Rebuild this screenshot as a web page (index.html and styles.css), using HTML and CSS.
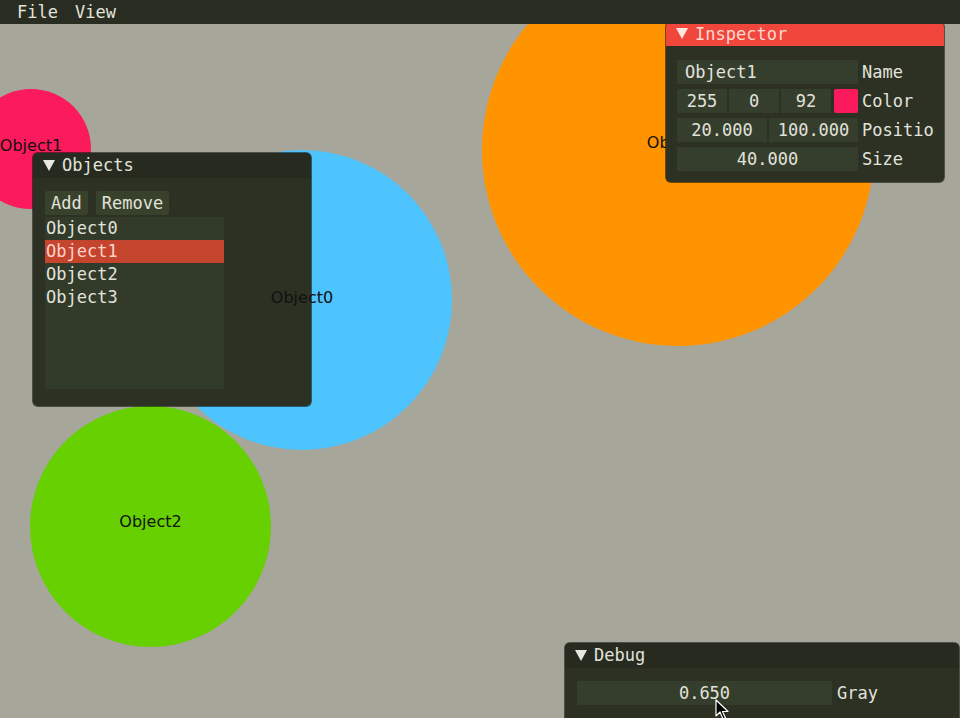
FILE: index.html
```html
<!DOCTYPE html>
<html>
<head>
<meta charset="utf-8">
<link rel="stylesheet" href="styles.css">
</head>
<body>
<div class="screen">
  <div class="menubar">
    <span class="menu-item">File</span>
    <span class="menu-item">View</span>
  </div>

  <div class="canvas">
    <div class="circle c-orange"><span class="clabel">Object3</span></div>
    <div class="circle c-blue"><span class="clabel top">Object0</span></div>
    <div class="circle c-pink"><span class="clabel">Object1</span></div>
    <div class="circle c-green"><span class="clabel">Object2</span></div>

    <div class="win win-objects">
      <div class="titlebar"><span class="tri"></span><span>Objects</span></div>
      <div class="wbody objects-body">
        <div class="btnrow">
          <span class="btn">Add</span>
          <span class="btn">Remove</span>
        </div>
        <div class="listbox">
          <div class="item">Object0</div>
          <div class="item selected">Object1</div>
          <div class="item">Object2</div>
          <div class="item">Object3</div>
        </div>
      </div>
    </div>

    <div class="win win-inspector">
      <div class="titlebar active"><span class="tri"></span><span>Inspector</span></div>
      <div class="wbody inspector-body">
        <div class="row">
          <div class="fields"><span class="field left grow">Object1</span></div>
          <span class="label">Name</span>
        </div>
        <div class="row">
          <div class="fields">
            <span class="field w50">255</span>
            <span class="field w50">0</span>
            <span class="field w50">92</span>
            <span class="swatch"></span>
          </div>
          <span class="label">Color</span>
        </div>
        <div class="row">
          <div class="fields">
            <span class="field w90">20.000</span>
            <span class="field grow">100.000</span>
          </div>
          <span class="label">Position</span>
        </div>
        <div class="row">
          <div class="fields"><span class="field grow">40.000</span></div>
          <span class="label">Size</span>
        </div>
      </div>
    </div>

    <div class="win win-debug">
      <div class="titlebar"><span class="tri"></span><span>Debug</span></div>
      <div class="wbody debug-body">
        <div class="row">
          <span class="field slider">0.650</span>
          <span class="label">Gray</span>
        </div>
      </div>
    </div>

    <svg class="cursor" width="16" height="22" viewBox="0 0 16 22">
      <path d="M1 1 L1 17 L5 13 L8 20 L10.5 19 L7.5 12.5 L13 12.5 Z" fill="#000" stroke="#fff" stroke-width="1.2" stroke-linejoin="round"/>
    </svg>
  </div>
</div>
</body>
</html>
```

FILE: styles.css
```css
* { box-sizing: border-box; }
html, body { margin: 0; padding: 0; }
body {
  background: #a6a69b;
  font-family: "DejaVu Sans Mono", "Liberation Mono", monospace;
  font-size: 17px;
  color: #e2e2dc;
  overflow: hidden;
}
.screen {
  width: 960px;
  height: 718px;
  display: flex;
  flex-direction: column;
  overflow: hidden;
}
.menubar {
  height: 24px;
  flex: none;
  background: #292c20;
  display: flex;
  align-items: center;
  gap: 17px;
  padding-left: 17px;
  line-height: 24px;
  position: relative;
  z-index: 5;
}
.canvas {
  position: relative;
  flex: 1;
}
.circle {
  position: absolute;
  border-radius: 50%;
  display: flex;
  align-items: center;
  justify-content: center;
}
.clabel {
  font-family: "DejaVu Sans", "Liberation Sans", sans-serif;
  font-size: 16px;
  color: #111;
  white-space: nowrap;
  margin-top: -8px;
}
.clabel.top {
  position: relative;
  z-index: 3;
}
.c-pink { left: -29px; top: 65px; width: 120px; height: 120px; background: #fb1a5c; }
.c-blue { left: 152px; top: 126px; width: 300px; height: 300px; background: #4ec4ff; }
.c-blue .clabel { margin-top: -6px; }
.c-orange { left: 482px; top: -70px; width: 392px; height: 392px; background: #ff9300; }
.c-orange .clabel { margin-top: -16px; }
.c-green { left: 30px; top: 382px; width: 241px; height: 241px; background: #66d000; }
.c-green .clabel { margin-top: -10px; }

.win {
  position: absolute;
  z-index: 1;
  background: #2c3123;
  border-radius: 5px;
  overflow: hidden;
  box-shadow: 0 0 0 1px rgba(20, 22, 14, 0.6);
}
.titlebar {
  height: 25px;
  display: flex;
  align-items: center;
  padding-left: 10px;
  gap: 7px;
  background: #272b1f;
  line-height: 25px;
}
.titlebar.active {
  height: 24px;
  background: #f1463b;
  color: #ffd8d2;
}
.tri {
  width: 0;
  height: 0;
  border-left: 6px solid transparent;
  border-right: 6px solid transparent;
  border-top: 11px solid #e8e8e2;
  margin-top: -1px;
}
.titlebar.active .tri { border-top-color: #ffe4e0; }

.win-objects { left: 33px; top: 129px; width: 278px; height: 253px; }
.objects-body {
  padding: 13px 12px 0 12px;
  display: flex;
  flex-direction: column;
  gap: 2px;
}
.btnrow { display: flex; gap: 8px; }
.btn {
  height: 24px;
  line-height: 24px;
  padding: 0 6px;
  background: #37412c;
  border-radius: 2px;
}
.listbox {
  width: 179px;
  height: 172px;
  background: #323a29;
}
.item {
  height: 23px;
  line-height: 23px;
  padding-left: 1px;
}
.item.selected {
  background: #c4442e;
  color: #ffd2c8;
}

.win-inspector { left: 666px; top: -2px; width: 278px; height: 160px; }
.inspector-body {
  padding: 14px 9px 0 11px;
  display: flex;
  flex-direction: column;
  gap: 5px;
}
.row {
  display: flex;
  align-items: center;
  gap: 4px;
  white-space: nowrap;
  overflow: hidden;
}
.fields {
  width: 181px;
  flex: none;
  display: flex;
  gap: 2px;
}
.field {
  height: 24px;
  line-height: 24px;
  background: #353e2c;
  text-align: center;
  display: block;
  flex: none;
}
.field.left { text-align: left; padding-left: 8px; }
.field.grow { flex: 1; }
.field.w50 { width: 50px; }
.field.w90 { width: 90px; }
.swatch {
  width: 24px;
  height: 24px;
  margin-left: 1px;
  background: #fb1a5c;
  border-radius: 2px;
  flex: none;
}
.label { line-height: 24px; }

.win-debug { left: 565px; top: 619px; width: 394px; height: 90px; }
.debug-body { padding: 13px 0 0 12px; }
.field.slider { width: 255px; }
.debug-body .row { gap: 5px; }

.cursor {
  position: absolute;
  z-index: 4;
  left: 715px;
  top: 675px;
}
```
